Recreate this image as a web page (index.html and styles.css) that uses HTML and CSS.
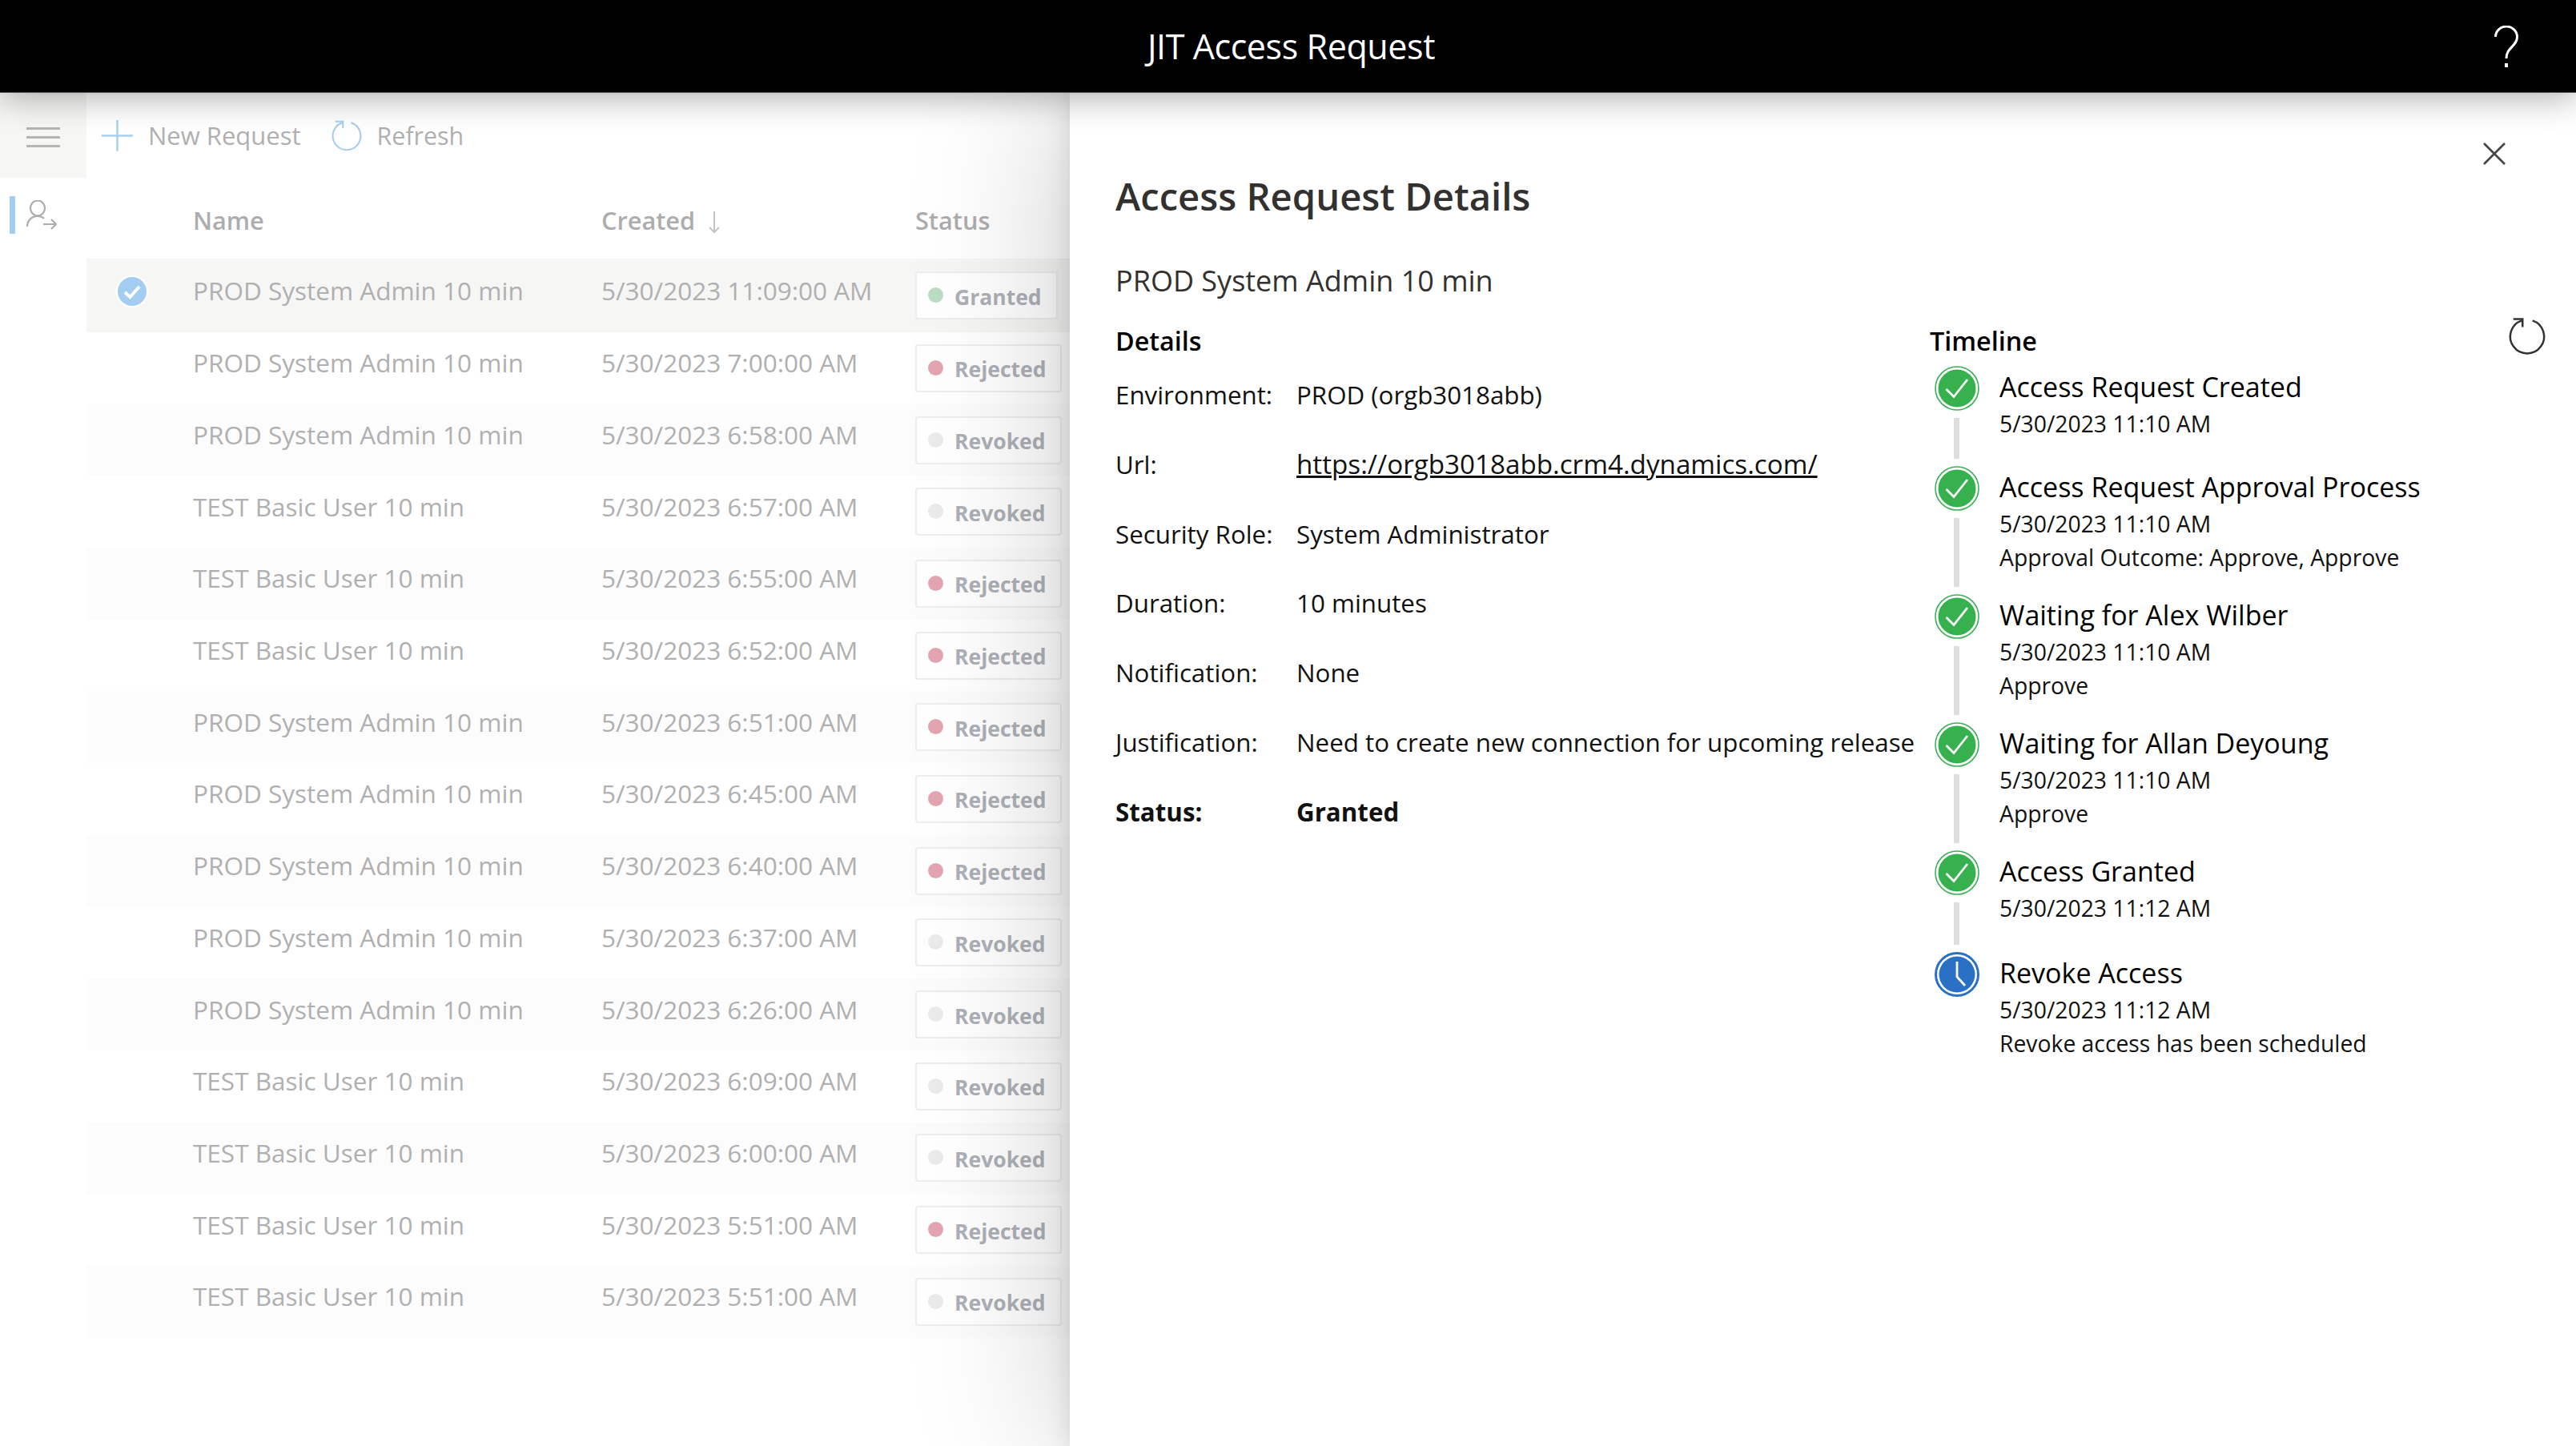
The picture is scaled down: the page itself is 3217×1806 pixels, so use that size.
FILE: index.html
```html
<!DOCTYPE html>
<html lang="en">
<head>
<meta charset="utf-8">
<title>JIT Access Request</title>
<link rel="stylesheet" href="styles.css">
</head>
<body>
<svg class="defs" width="0" height="0" aria-hidden="true">
  <symbol id="refresh" viewBox="0 0 48 48">
    <path d="M17 3.5A22 22 0 1 0 31 3.5" fill="none" stroke="currentColor" stroke-width="2.6"/>
    <path d="M6 1.5H18V12" fill="none" stroke="currentColor" stroke-width="2.6"/>
  </symbol>
  <symbol id="done" viewBox="0 0 56 56">
    <circle cx="28" cy="28" r="27" fill="#fff" stroke="#3cb054" stroke-width="1.6"/>
    <circle cx="28" cy="28" r="23.5" fill="#37b04e"/>
    <path d="M14.5 29L24 38.5L41 17" fill="none" stroke="#fff" stroke-width="2.8"/>
  </symbol>
  <symbol id="clock" viewBox="0 0 56 56">
    <circle cx="28" cy="28" r="26.5" fill="#fff" stroke="#2a70c4" stroke-width="3"/>
    <circle cx="28" cy="28" r="22.5" fill="#2a70c4"/>
    <path d="M28 12V31L38 42" fill="none" stroke="#fff" stroke-width="2.8"/>
  </symbol>
</svg>
<div class="app">
  <header class="topbar">
    <span></span>
    <h1 class="app-title">JIT Access Request</h1>
    <svg class="help" viewBox="0 0 30 52"><path d="M1.5 14A13.5 13 0 0 1 28.5 14C28.5 26 15 27 15 41" fill="none" stroke="#fff" stroke-width="3"/><rect x="13" y="47" width="4" height="5" fill="#fff"/></svg>
  </header>
  <main class="stage">
    <section class="backdrop">
      <nav class="rail">
        <div class="rail-top">
          <span class="burger"><i></i><i></i><i></i></span>
        </div>
        <div class="rail-item">
          <span class="rail-mark"></span>
          <svg class="user-ico" viewBox="0 0 38 38"><ellipse cx="14" cy="10" rx="9" ry="9.5" fill="none" stroke="#adadad" stroke-width="2.2"/><path d="M1 33C1 26 6 20 14 20C17 20 20 21 22 23" fill="none" stroke="#adadad" stroke-width="2.2"/><path d="M21 30H37M31 24L37 30L31 36" fill="none" stroke="#adadad" stroke-width="2.2"/></svg>
        </div>
      </nav>
      <div class="list">
        <div class="toolbar">
          <span class="tool"><svg class="plus" viewBox="0 0 39 39"><path d="M19.5 0V39M0 19.5H39" stroke="#a6cff0" stroke-width="2.4" fill="none"/></svg>New Request</span>
          <span class="tool tool-refresh"><svg class="tool-ico"><use href="#refresh"/></svg>Refresh</span>
        </div>
        <div class="table-head">
          <span></span><span>Name</span>
          <span>Created <svg class="sort" viewBox="0 0 16 28"><path d="M8 0V26M2 20L8 26L14 20" fill="none" stroke="#c4c4c4" stroke-width="2"/></svg></span>
          <span>Status</span>
        </div>
        <div class="row selected"><span class="cell-check"><svg class="check" viewBox="0 0 42 42"><circle cx="21" cy="21" r="20.5" fill="#fff"/><circle cx="21" cy="21" r="18" fill="#a3cef1"/><path d="M12 22L18.5 28L30 15" fill="none" stroke="#fff" stroke-width="4"/></svg></span><span class="name">PROD System Admin 10 min</span><span class="date">5/30/2023 11:09:00 AM</span><span class="badge"><i class="dot green"></i>Granted</span></div>
        <div class="row"><span></span><span class="name">PROD System Admin 10 min</span><span class="date">5/30/2023 7:00:00 AM</span><span class="badge"><i class="dot red"></i>Rejected</span></div>
        <div class="row alt"><span></span><span class="name">PROD System Admin 10 min</span><span class="date">5/30/2023 6:58:00 AM</span><span class="badge"><i class="dot grey"></i>Revoked</span></div>
        <div class="row"><span></span><span class="name">TEST Basic User 10 min</span><span class="date">5/30/2023 6:57:00 AM</span><span class="badge"><i class="dot grey"></i>Revoked</span></div>
        <div class="row alt"><span></span><span class="name">TEST Basic User 10 min</span><span class="date">5/30/2023 6:55:00 AM</span><span class="badge"><i class="dot red"></i>Rejected</span></div>
        <div class="row"><span></span><span class="name">TEST Basic User 10 min</span><span class="date">5/30/2023 6:52:00 AM</span><span class="badge"><i class="dot red"></i>Rejected</span></div>
        <div class="row alt"><span></span><span class="name">PROD System Admin 10 min</span><span class="date">5/30/2023 6:51:00 AM</span><span class="badge"><i class="dot red"></i>Rejected</span></div>
        <div class="row"><span></span><span class="name">PROD System Admin 10 min</span><span class="date">5/30/2023 6:45:00 AM</span><span class="badge"><i class="dot red"></i>Rejected</span></div>
        <div class="row alt"><span></span><span class="name">PROD System Admin 10 min</span><span class="date">5/30/2023 6:40:00 AM</span><span class="badge"><i class="dot red"></i>Rejected</span></div>
        <div class="row"><span></span><span class="name">PROD System Admin 10 min</span><span class="date">5/30/2023 6:37:00 AM</span><span class="badge"><i class="dot grey"></i>Revoked</span></div>
        <div class="row alt"><span></span><span class="name">PROD System Admin 10 min</span><span class="date">5/30/2023 6:26:00 AM</span><span class="badge"><i class="dot grey"></i>Revoked</span></div>
        <div class="row"><span></span><span class="name">TEST Basic User 10 min</span><span class="date">5/30/2023 6:09:00 AM</span><span class="badge"><i class="dot grey"></i>Revoked</span></div>
        <div class="row alt"><span></span><span class="name">TEST Basic User 10 min</span><span class="date">5/30/2023 6:00:00 AM</span><span class="badge"><i class="dot grey"></i>Revoked</span></div>
        <div class="row"><span></span><span class="name">TEST Basic User 10 min</span><span class="date">5/30/2023 5:51:00 AM</span><span class="badge"><i class="dot red"></i>Rejected</span></div>
        <div class="row alt"><span></span><span class="name">TEST Basic User 10 min</span><span class="date">5/30/2023 5:51:00 AM</span><span class="badge"><i class="dot grey"></i>Revoked</span></div>
      </div>
    </section>
    <section class="panel">
      <div class="panel-head">
        <h2 class="panel-title">Access Request Details</h2>
        <svg class="close" viewBox="0 0 28 28"><path d="M1 1L27 27M27 1L1 27" stroke="#444" stroke-width="2.6" fill="none"/></svg>
      </div>
      <div class="subject">PROD System Admin 10 min</div>
      <div class="panel-body">
        <div class="details">
          <h3 class="section-title">Details</h3>
          <div class="field"><span>Environment:</span><span>PROD (orgb3018abb)</span></div>
          <div class="field"><span>Url:</span><a href="#">https://orgb3018abb.crm4.dynamics.com/</a></div>
          <div class="field"><span>Security Role:</span><span>System Administrator</span></div>
          <div class="field"><span>Duration:</span><span>10 minutes</span></div>
          <div class="field"><span>Notification:</span><span>None</span></div>
          <div class="field"><span>Justification:</span><span>Need to create new connection for upcoming release</span></div>
          <div class="field strong"><span>Status:</span><span>Granted</span></div>
        </div>
        <div class="timeline">
          <div class="timeline-head">
            <h3 class="section-title">Timeline</h3>
            <svg class="tl-refresh"><use href="#refresh"/></svg>
          </div>
          <div class="step">
            <div class="rail-col"><svg class="step-ico"><use href="#done"/></svg><span class="link"></span></div>
            <div class="step-text"><div class="step-title">Access Request Created</div><div class="step-line">5/30/2023 11:10 AM</div></div>
          </div>
          <div class="step">
            <div class="rail-col"><svg class="step-ico"><use href="#done"/></svg><span class="link"></span></div>
            <div class="step-text"><div class="step-title">Access Request Approval Process</div><div class="step-line">5/30/2023 11:10 AM</div><div class="step-line tall">Approval Outcome: Approve, Approve</div></div>
          </div>
          <div class="step">
            <div class="rail-col"><svg class="step-ico"><use href="#done"/></svg><span class="link"></span></div>
            <div class="step-text"><div class="step-title">Waiting for Alex Wilber</div><div class="step-line">5/30/2023 11:10 AM</div><div class="step-line tall">Approve</div></div>
          </div>
          <div class="step">
            <div class="rail-col"><svg class="step-ico"><use href="#done"/></svg><span class="link"></span></div>
            <div class="step-text"><div class="step-title">Waiting for Allan Deyoung</div><div class="step-line">5/30/2023 11:10 AM</div><div class="step-line tall">Approve</div></div>
          </div>
          <div class="step step-wide">
            <div class="rail-col"><svg class="step-ico"><use href="#done"/></svg><span class="link"></span></div>
            <div class="step-text"><div class="step-title">Access Granted</div><div class="step-line">5/30/2023 11:12 AM</div></div>
          </div>
          <div class="step">
            <div class="rail-col"><svg class="step-ico"><use href="#clock"/></svg></div>
            <div class="step-text"><div class="step-title">Revoke Access</div><div class="step-line">5/30/2023 11:12 AM</div><div class="step-line tall">Revoke access has been scheduled</div></div>
          </div>
        </div>
      </div>
    </section>
  </main>
</div>
</body>
</html>
```
FILE: styles.css
```css
* { box-sizing: border-box; }
html, body { margin: 0; padding: 0; }
body { font-family: "Open Sans", "Noto Sans", sans-serif; background: #fff; color: #000; }
.defs { position: absolute; }
.app { width: 3217px; height: 1806px; display: flex; flex-direction: column; overflow: hidden; }

.topbar { height: 116px; flex: none; background: #000; border-bottom: 1px solid #555; display: grid; grid-template-columns: 1fr auto 1fr; align-items: center; position: relative; z-index: 3; box-shadow: 0 8px 40px rgba(0,0,0,.3); }
.app-title { margin: 0 0 0 8px; color: #fff; font-size: 43px; font-weight: 400; letter-spacing: -.4px; }
.help { width: 30px; height: 52px; justify-self: end; margin-right: 72px; }

.stage { flex: 1; display: flex; min-height: 0; }
.backdrop { width: 1336px; flex: none; display: flex; overflow: hidden; }
.rail { width: 108px; flex: none; }
.rail-top { height: 106px; background: #f6f6f5; display: flex; padding: 43px 0 0 33px; }
.burger { display: flex; flex-direction: column; gap: 8px; width: 42px; }
.burger i { display: block; height: 3px; background: #b5b5b3; }
.rail-item { display: flex; align-items: flex-start; padding: 23px 0 0 12px; gap: 14px; }
.rail-mark { width: 7px; height: 47px; background: #a3cef1; }
.user-ico { width: 38px; height: 38px; margin-top: 5px; }

.list { flex: 1; min-width: 0; color: #b0b0b0; }
.toolbar { height: 106px; display: flex; align-items: center; padding: 0 0 0 19px; font-size: 31px; color: #b0b0b0; }
.tool { display: flex; align-items: center; }
.plus { width: 39px; height: 39px; margin-right: 19px; }
.tool-refresh { margin-left: 38px; font-size: 30.4px; }
.tool-ico { width: 38px; height: 39px; margin-right: 19px; color: #a6cff0; }
.table-head { height: 101px; display: grid; grid-template-columns: 133px 510px 392px 1fr; align-items: center; padding-top: 4px; font-size: 30.7px; font-weight: 600; color: #adadad; }
.sort { width: 16px; height: 28px; vertical-align: -5px; margin-left: 8px; }
.row { height: 89.7px; display: grid; grid-template-columns: 133px 510px 392px 1fr; align-items: center; font-size: 31.5px; white-space: nowrap; }
.row.selected { height: 92px; background: #f6f6f5; }
.row.alt { background: #fcfcfc; }
.name, .date { padding-bottom: 14px; }
.cell-check { display: flex; padding: 0 0 10px 36px; }
.check { width: 42px; height: 42px; }
.badge { justify-self: start; height: 60px; padding: 3px 18px 0 14px; background: #fff; border: 2px solid #eceef0; border-radius: 4px; display: flex; align-items: center; font-size: 26.5px; font-weight: 700; color: #adb0b6; }
.dot { width: 19px; height: 19px; border-radius: 50%; margin-right: 14px; margin-top: -4px; }
.dot.green { background: #bcdcc6; }
.dot.red { background: #e3a5b2; }
.dot.grey { background: #ebebeb; }

.panel { flex: 1; min-width: 0; background: #fff; padding: 0 0 0 57px; position: relative; z-index: 2; box-shadow: 0 0 180px rgba(0,0,0,.22), 0 0 30px rgba(0,0,0,.12); }
.panel-head { display: flex; justify-content: space-between; align-items: flex-start; height: 177px; }
.panel-title { margin: 96px 0 0; font-size: 47.2px; line-height: 66px; font-weight: 600; color: #323130; }
.close { width: 28px; height: 28px; margin: 62px 88px 0 0; }
.subject { font-size: 36px; line-height: 50px; color: #323130; height: 72px; margin-top: 33px; }
.panel-body { display: flex; margin-top: 5px; }
.details { width: 1017px; flex: none; }
.section-title { margin: 0; font-size: 32.3px; line-height: 44px; font-weight: 600; color: #000; }
.field { display: grid; grid-template-columns: 226px 1fr; height: 86.8px; font-size: 31.3px; line-height: 44px; white-space: nowrap; color: #111; }
.details .section-title { height: 68px; }
.field a { color: #111; text-decoration: underline; font-size: 33.2px; }
.field.strong { font-weight: 700; }
.timeline { flex: 1; min-width: 0; }
.timeline-head { display: flex; justify-content: space-between; height: 54px; padding-right: 38px; }
.tl-refresh { width: 46px; height: 48px; color: #333; margin-top: -7px; }
.step { display: flex; min-height: 125px; }
.step-wide { min-height: 127px; }
.rail-col { width: 87px; padding-left: 6px; flex: none; display: flex; flex-direction: column; }
.step-ico { width: 56px; height: 56px; flex: none; }
.link { width: 7px; flex: 1; margin: 9px 0 9px 24px; background: #dedede; }
.step-text { padding-bottom: 23px; color: #111; white-space: nowrap; }
.step-title { font-size: 34px; line-height: 52px; font-weight: 500; color: #000; }
.step-line { font-size: 28.3px; line-height: 40px; }
.step-line.tall { line-height: 45px; }
```
